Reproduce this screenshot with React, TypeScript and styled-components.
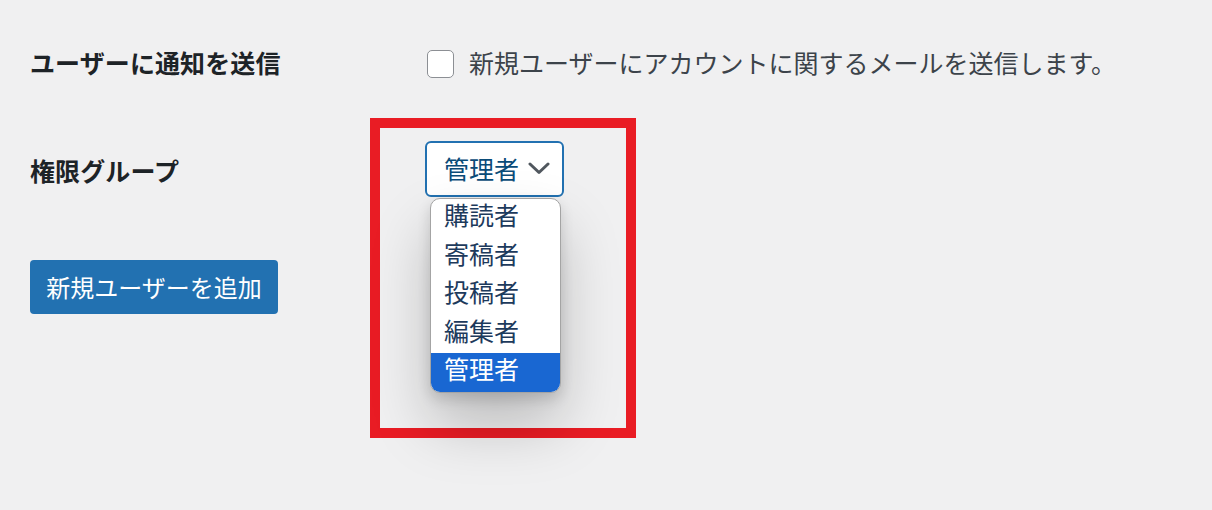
import React from "react";
import styled, { createGlobalStyle } from "styled-components";

const GlobalStyle = createGlobalStyle`
  html, body {
    margin: 0;
    padding: 0;
    background: #f0f0f1;
  }
  body {
    font-family: "Noto Sans CJK JP", "Noto Sans", sans-serif;
    color: #1d2327;
  }
`;

const Page = styled.div`
  width: 1212px;
  height: 510px;
  padding-left: 30px;
  box-sizing: border-box;
  overflow: hidden;
`;

const Row = styled.div`
  display: flex;
  align-items: center;
  padding-top: 37px;
  height: 50px;
`;

const Label = styled.div<{ $width?: number }>`
  width: ${(p) => (p.$width ? `${p.$width}px` : "auto")};
  flex-shrink: 0;
  font-size: 25px;
  line-height: 36px;
  font-weight: 700;
  color: #1d2327;
  letter-spacing: 0.1px;
`;

const CheckLabel = styled.label`
  display: flex;
  align-items: center;
  gap: 15px;
  font-size: 25px;
  color: #3c434a;
  margin-left: 1px;
`;

const Checkbox = styled.span`
  width: 27px;
  height: 28px;
  margin-top: 3px;
  box-sizing: border-box;
  border: 1px solid #8c8f94;
  border-radius: 5px;
  background: #fff;
`;

const RoleSection = styled.div`
  display: flex;
  margin-top: 31px;
`;

const LeftColumn = styled.div`
  width: 340px;
  padding-top: 34px;
  display: flex;
  flex-direction: column;
  align-items: flex-start;
  gap: 72px;
`;

const PrimaryButton = styled.button`
  width: 248px;
  height: 54px;
  border: none;
  border-radius: 4px;
  background: #2271b1;
  color: #fff;
  font-family: inherit;
  font-size: 24px;
  padding: 0 0 2px;
  cursor: pointer;
`;

const Highlight = styled.div`
  width: 266px;
  height: 320px;
  box-sizing: border-box;
  border: 10px solid #e91c24;
  padding: 13px 0 0 45px;
`;

const SelectBox = styled.div`
  width: 139px;
  height: 56px;
  box-sizing: border-box;
  border: 2px solid #2271b1;
  border-radius: 6px;
  background: #fff;
  display: flex;
  align-items: center;
  gap: 9px;
  padding: 0 0 2px 17px;
  font-size: 25px;
  color: #0a4b78;
`;

const ListBox = styled.ul`
  list-style: none;
  margin: 1px 0 0 5px;
  padding: 0;
  width: 131px;
  box-sizing: border-box;
  border: 1px solid #a4a4a4;
  border-radius: 10px;
  background: #fff;
  box-shadow: 0 32px 60px rgba(0, 0, 0, 0.22), 0 6px 14px rgba(0, 0, 0, 0.14);
`;

const Option = styled.li<{ $selected?: boolean }>`
  height: 38.6px;
  line-height: 30px;
  padding-left: 13px;
  font-size: 25px;
  color: ${(p) => (p.$selected ? "#fff" : "#1d3a5c")};
  background: ${(p) => (p.$selected ? "#1967d2" : "transparent")};

  &:first-child {
    border-radius: 9px 9px 0 0;
  }
  &:last-child {
    border-radius: 0 0 9px 9px;
  }
`;

const Chevron = () => (
  <svg width="22" height="13" viewBox="0 0 22 13" fill="none">
    <path
      d="M2 2 L11 10.5 L20 2"
      stroke="#50575e"
      strokeWidth="3"
      strokeLinecap="round"
      strokeLinejoin="round"
    />
  </svg>
);

const roles = ["購読者", "寄稿者", "投稿者", "編集者", "管理者"];

export default function App() {
  const selected = "管理者";
  return (
    <>
      <GlobalStyle />
      <Page>
        <Row>
          <Label $width={396}>ユーザーに通知を送信</Label>
          <CheckLabel>
            <Checkbox />
            新規ユーザーにアカウントに関するメールを送信します。
          </CheckLabel>
        </Row>
        <RoleSection>
          <LeftColumn>
            <Label>権限グループ</Label>
            <PrimaryButton>新規ユーザーを追加</PrimaryButton>
          </LeftColumn>
          <Highlight>
            <SelectBox>
              {selected}
              <Chevron />
            </SelectBox>
            <ListBox>
              {roles.map((r) => (
                <Option key={r} $selected={r === selected}>
                  {r}
                </Option>
              ))}
            </ListBox>
          </Highlight>
        </RoleSection>
      </Page>
    </>
  );
}
